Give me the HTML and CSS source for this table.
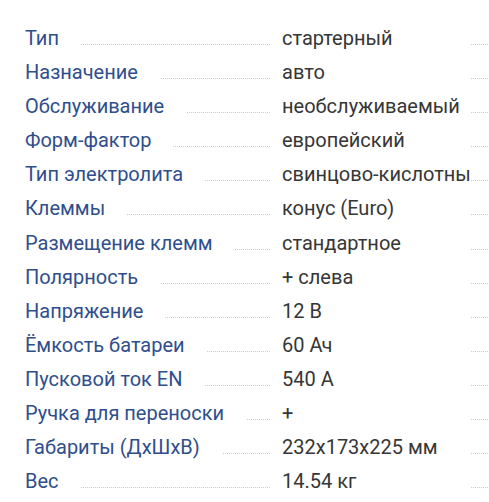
FILE: index.html
```html
<!DOCTYPE html>
<html lang="ru">
<head>
<meta charset="utf-8">
<link rel="stylesheet" href="styles.css">
</head>
<body>
<div class="specs">
  <div class="row"><div class="label"><span>Тип</span></div><div class="value">стартерный</div></div>
  <div class="row"><div class="label"><span>Назначение</span></div><div class="value">авто</div></div>
  <div class="row"><div class="label"><span>Обслуживание</span></div><div class="value">необслуживаемый</div></div>
  <div class="row"><div class="label"><span>Форм-фактор</span></div><div class="value">европейский</div></div>
  <div class="row"><div class="label"><span>Тип электролита</span></div><div class="value">свинцово-кислотный</div></div>
  <div class="row"><div class="label"><span>Клеммы</span></div><div class="value">конус (Euro)</div></div>
  <div class="row"><div class="label"><span>Размещение клемм</span></div><div class="value">стандартное</div></div>
  <div class="row"><div class="label"><span>Полярность</span></div><div class="value">+ слева</div></div>
  <div class="row"><div class="label"><span>Напряжение</span></div><div class="value">12 В</div></div>
  <div class="row"><div class="label"><span>Ёмкость батареи</span></div><div class="value">60 Ач</div></div>
  <div class="row"><div class="label"><span>Пусковой ток EN</span></div><div class="value">540 А</div></div>
  <div class="row"><div class="label"><span>Ручка для переноски</span></div><div class="value">+</div></div>
  <div class="row"><div class="label"><span>Габариты (ДхШхВ)</span></div><div class="value">232x173x225 мм</div></div>
  <div class="row"><div class="label"><span>Вес</span></div><div class="value">14.54 кг</div></div>
</div>
</body>
</html>
```

FILE: styles.css
```css
html, body {
  margin: 0;
  padding: 0;
  background: #fff;
}
body {
  font-family: Roboto, "Liberation Sans", sans-serif;
  font-size: 20px;
  overflow: hidden;
}
.specs {
  padding: 21px 0 0 25px;
}
.row {
  display: flex;
  height: 34.1px;
  line-height: 34px;
  background-image: linear-gradient(to right, #cccccc 50%, transparent 50%);
  background-size: 2px 1px;
  background-repeat: repeat-x;
  background-position: 0 23px;
}
.label {
  width: 245px;
  flex: none;
  color: #2f4e8c;
  white-space: nowrap;
}
.label span {
  background: #fff;
  padding-right: 22px;
}
.value {
  width: 188px;
  flex: none;
  padding-left: 12px;
  background: #fff;
  color: #363636;
  white-space: nowrap;
  overflow: hidden;
}
```
